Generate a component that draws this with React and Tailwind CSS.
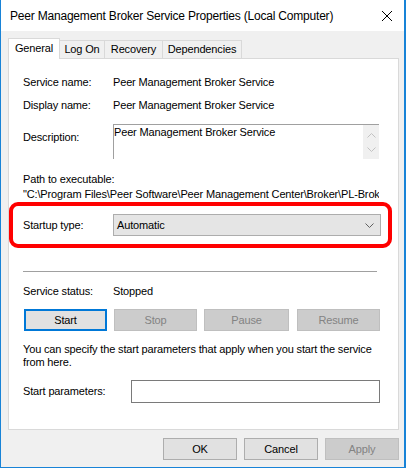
import React from 'react';

const Chevron = ({ up = false, className = '' }) => (
  <svg width="9" height="5" viewBox="0 0 9 5" className={className}>
    <path
      d={up ? 'M0.5 4.5 L4.5 0.5 L8.5 4.5' : 'M0.5 0.5 L4.5 4.5 L8.5 0.5'}
      fill="none"
      stroke="currentColor"
      strokeWidth="1"
    />
  </svg>
);

const Button = ({ children, disabled = false, focused = false, className = '' }) => {
  let look = 'bg-[#e1e1e1] border border-[#adadad] text-black';
  if (disabled) look = 'bg-[#cccccc] border border-[#bfbfbf] text-[#838383]';
  if (focused) look = 'bg-[#e1e1e1] border-2 border-[#0078d7] text-black';
  return (
    <div className={`h-[22px] flex items-center justify-center ${look} ${className}`}>
      {children}
    </div>
  );
};

const Tab = ({ label, active = false }) => (
  <div
    className={
      active
        ? 'relative z-10 -mb-px h-[21px] w-[52px] border border-b-0 border-[#d9d9d9] bg-white flex items-center justify-center pb-[2px]'
        : 'h-[18px] border border-l-0 border-b-0 border-[#d9d9d9] bg-[#f0f0f0] flex items-center justify-center'
    }
  >
    {label}
  </div>
);

export default function App() {
  return (
    <div
      className="w-[406px] h-[468px] flex flex-col bg-[#f0f0f0] border-l border-r-2 border-b border-[#1883d7] text-[11px] tracking-[-0.15px] text-black overflow-hidden"
      style={{ fontFamily: '"Liberation Sans", Arial, sans-serif' }}
    >
      {/* title bar */}
      <div className="h-[31px] bg-white flex items-center justify-between pl-[9px] pr-[9px] shrink-0">
        <span className="text-[12px] tracking-[-0.2px] text-black">
          Peer Management Broker Service Properties (Local Computer)
        </span>
        <svg width="12" height="12" viewBox="0 0 12 12" className="mr-[2px]">
          <path d="M1 1 L11 11 M11 1 L1 11" stroke="#000" strokeWidth="1" />
        </svg>
      </div>

      {/* tabs */}
      <div className="flex items-end ml-[7px] mt-[7px]">
        <Tab label="General" active />
        <div className="w-[45px]"><Tab label="Log On" /></div>
        <div className="w-[58px]"><Tab label="Recovery" /></div>
        <div className="w-[79px]"><Tab label="Dependencies" /></div>
      </div>

      {/* General page */}
      <div className="ml-[7px] w-[391px] h-[372px] border border-[#d9d9d9] bg-white flex flex-col">
        <div className="mt-[16px] h-[14px] flex items-center pl-[14px]">
          <span className="w-[90px]">Service name:</span>
          <span>Peer Management Broker Service</span>
        </div>
        <div className="mt-[9px] h-[14px] flex items-center pl-[14px]">
          <span className="w-[90px]">Display name:</span>
          <span>Peer Management Broker Service</span>
        </div>
        <div className="mt-[12px] flex items-start pl-[14px]">
          <span className="w-[90px] mt-[5px]">Description:</span>
          <div className="w-[266px] h-[35px] border-t border-l border-[#a0a0a0] flex justify-between">
            <span className="leading-[14px]">Peer Management Broker Service</span>
            <div className="w-[16px] bg-[#f0f0f0] flex flex-col items-center justify-around text-[#c2c2c2] py-[3px]">
              <Chevron up />
              <Chevron />
            </div>
          </div>
        </div>
        <div className="mt-[13px] h-[14px] flex items-center pl-[14px]">Path to executable:</div>
        <div className="mt-[1px] h-[14px] flex items-center ml-[14px] w-[356px] overflow-hidden whitespace-nowrap">
          "C:\Program Files\Peer Software\Peer Management Center\Broker\PL-Broker.exe"
        </div>

        {/* highlighted startup type */}
        <div className="mt-[1px] w-[383px] h-[46px] border-4 border-[#ff0000] rounded-[9px] flex items-center pl-[10px]">
          <span className="w-[90px]">Startup type:</span>
          <div className="w-[268px] h-[22px] bg-[#e5e5e5] border border-[#adadad] flex items-center justify-between pl-[3px] pr-[6px]">
            <span>Automatic</span>
            <Chevron className="text-[#606060]" />
          </div>
        </div>

        <div className="mt-[23px] ml-[14px] w-[354px] h-px bg-[#a0a0a0]" />

        <div className="mt-[12px] h-[14px] flex items-center pl-[14px]">
          <span className="w-[90px]">Service status:</span>
          <span>Stopped</span>
        </div>
        <div className="mt-[11px] flex pl-[15px] gap-[7px]">
          <Button focused className="w-[83px]">Start</Button>
          <Button disabled className="w-[83px]">Stop</Button>
          <Button disabled className="w-[85px]">Pause</Button>
          <Button disabled className="w-[83px] ml-[1px]">Resume</Button>
        </div>
        <p className="mt-[12px] pl-[14px] pr-[10px] leading-[13px]">
          You can specify the start parameters that apply when you start the service from here.
        </p>
        <div className="mt-[11px] flex items-center pl-[14px]">
          <span className="w-[108px]">Start parameters:</span>
          <div className="w-[249px] h-[23px] border border-[#7a7a7a] bg-white" />
        </div>
      </div>

      {/* dialog buttons */}
      <div className="mt-[8px] flex pl-[162px] gap-[7px]">
        <Button className="w-[74px]">OK</Button>
        <Button className="w-[74px]">Cancel</Button>
        <Button disabled className="w-[74px]">Apply</Button>
      </div>
    </div>
  );
}
